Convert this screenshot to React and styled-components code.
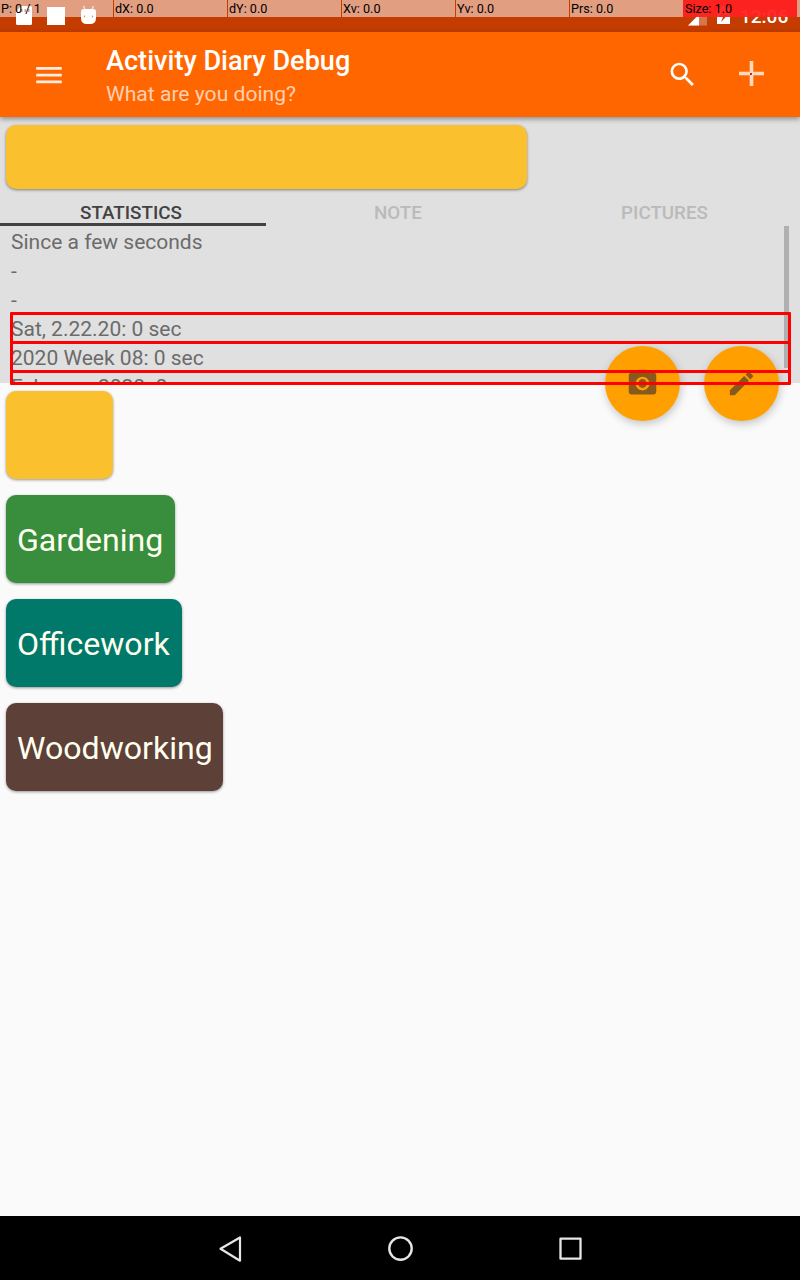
import React from "react";
import styled, { createGlobalStyle } from "styled-components";

const GlobalStyle = createGlobalStyle`
  * { box-sizing: border-box; }
  body { margin: 0; background: #fafafa; font-family: Roboto, "Liberation Sans", sans-serif; }
  svg { display: block; }
`;

const Screen = styled.div`
  position: relative;
  width: 800px;
  height: 1280px;
  overflow: hidden;
  display: flex;
  flex-direction: column;
  background: #fafafa;
`;

const StatusBar = styled.header`
  flex: none;
  height: 32px;
  padding: 0 11px 0 13px;
  display: flex;
  justify-content: space-between;
  align-items: center;
  background: #c43c00;
  color: #fff;
`;

const StatusGroup = styled.div`
  display: flex;
  align-items: center;
  gap: ${(p) => p.$gap}px;
`;

const Clock = styled.span`
  height: 32px;
  padding-top: 1px;
  font-size: 19px;
  font-weight: 500;
  line-height: 32px;
  width: 49px;
  white-space: nowrap;
`;

const PointerBar = styled.div`
  position: absolute;
  top: 0;
  left: 0;
  width: 800px;
  height: 17px;
  display: flex;
  gap: 1px;
`;

const PointerCell = styled.span`
  flex: ${(p) => (p.$last ? "1" : "none")};
  width: 113px;
  height: 17px;
  margin-left: ${(p) => (p.$hot ? -1 : 0)}px;
  padding-left: ${(p) => (p.$hot ? 2 : 1)}px;
  font-size: 12.6px;
  line-height: 17px;
  color: #000;
  white-space: pre;
  background: ${(p) => (p.$hot ? "linear-gradient(90deg, rgba(255,33,33,.94) 114px, rgba(255,255,255,.5) 114px)" : "rgba(255,255,255,.5)")};
`;

const AppBar = styled.div`
  flex: none;
  position: relative;
  z-index: 1;
  height: 85px;
  display: flex;
  align-items: center;
  padding: 0 33px 0 33px;
  background: #ff6600;
  box-shadow: 0 2px 5px rgba(0, 0, 0, 0.38);
`;

const Titles = styled.div`
  flex: 1;
  margin-left: 41px;
  padding-top: 6px;
`;

const Title = styled.h1`
  margin: 0;
  font-size: 27.1px;
  font-weight: 500;
  line-height: 32px;
  color: #fff;
`;

const Subtitle = styled.p`
  margin: 0;
  font-size: 21.1px;
  line-height: 33px;
  color: rgba(255, 255, 255, 0.7);
`;

const Actions = styled.div`
  display: flex;
  align-items: center;
  gap: 37px;
  padding-bottom: 2px;
`;

const Detail = styled.section`
  flex: none;
  height: 266px;
  overflow: hidden;
  background: #e0e0e0;
`;

const CurrentActivity = styled.div`
  width: 521px;
  height: 64px;
  margin: 8px 0 0 6px;
  border-radius: 10px;
  background: #fbc02d;
  box-shadow: 0 1px 3px rgba(0, 0, 0, 0.45);
`;

const Tabs = styled.div`
  display: grid;
  grid-template-columns: 266px 266px 268px;
  height: 37px;
`;

const Tab = styled.div`
  padding: 15px ${(p) => p.$shift}px 0 0;
  border-bottom: 3px solid ${(p) => (p.$active ? "#424242" : "transparent")};
  color: ${(p) => (p.$active ? "#424242" : "#bababa")};
  font-size: 18.8px;
  font-weight: 500;
  line-height: 19px;
  text-align: center;
`;

const StatsScroll = styled.div`
  display: flex;
  justify-content: space-between;
  height: 157px;
  padding: 0 11px;
  overflow: hidden;
`;

const StatList = styled.div`
  padding-top: 2px;
`;

const Stat = styled.div`
  height: 29px;
  font-size: 21px;
  line-height: 29px;
  color: #6b6b6b;
  white-space: nowrap;
`;

const ScrollThumb = styled.div`
  width: 5px;
  height: 142px;
  background: #b0b0b0;
`;

const Activities = styled.main`
  flex: 1;
  display: flex;
  flex-direction: column;
  align-items: flex-start;
  gap: 16px;
  padding: 8px 6px;
`;

const ActivityCard = styled.button`
  width: ${(p) => p.$width}px;
  height: 88px;
  padding: 1px 0 0 11px;
  border: 0;
  border-radius: 10px;
  background: ${(p) => p.$color};
  box-shadow: 0 1px 3px rgba(0, 0, 0, 0.4);
  color: #fffff0;
  font-family: inherit;
  font-size: 32.1px;
  text-align: left;
  white-space: nowrap;
`;

const Fabs = styled.div`
  position: absolute;
  left: 605px;
  top: 346px;
  display: flex;
  gap: 24px;
`;

const Fab = styled.div`
  width: 75px;
  height: 75px;
  padding-right: 1px;
  border-radius: 50%;
  display: flex;
  align-items: center;
  justify-content: center;
  background: #ffa000;
  box-shadow: 1px 3px 9px rgba(0, 0, 0, 0.22);
  color: #855a1c;
`;

const Outlines = styled.div`
  position: absolute;
  left: 10px;
  top: 312px;
  width: 781px;
  height: 73px;
  border: 3px solid #f00;
  border-radius: 1px;
  display: grid;
  grid-template-rows: 29px 29px 1fr;
`;

const OutlineRow = styled.div`
  border-bottom: ${(p) => (p.$last ? 0 : 3)}px solid #f00;
`;

const NavBar = styled.nav`
  flex: none;
  height: 64px;
  display: flex;
  justify-content: center;
  align-items: center;
  gap: 138px;
  background: #000;
`;

const pointerFields = ["P: 0 / 1", "dX: 0.0", "dY: 0.0", "Xv: 0.0", "Yv: 0.0", "Prs: 0.0", "Size: 1.0"];

const stats = ["Since a few seconds", "-", "-", "Sat, 2.22.20: 0 sec", "2020 Week 08: 0 sec", "February 2020: 0 sec"];

const activities = [
  { name: "", color: "#fbc02d", width: 107 },
  { name: "Gardening", color: "#388e3c", width: 169 },
  { name: "Officework", color: "#00796b", width: 176 },
  { name: "Woodworking", color: "#5d4037", width: 217 },
];

const SdCardIcon = () => (
  <svg width="22" height="32" viewBox="0 0 22 32" fill="#fff">
    <path fillRule="evenodd" d="M8 6h9.500q1.500 0 1.500 1.500v16q0 1.500-1.500 1.500h-13q-1.500 0-1.500-1.500v-12zM8 9v3h1.500v-3zm3.500 0v3h1.500v-3zm3.500 0v3h1.500v-3z" />
  </svg>
);

const SquareIcon = () => (
  <svg width="18" height="32" fill="#fff"><rect y="7" width="18" height="18" /></svg>
);

const DroidIcon = () => (
  <svg width="20" height="32" viewBox="-3.500 0 20 32">
    <path d="M3 6l2 4M13 6l-2 4" stroke="#fff" strokeWidth="1" />
    <path fillRule="evenodd" fill="#fff" d="M3 9h10q2.500 0 2.500 3v6q0 6-6 6h-3q-6 0-6-6v-6q0-3 2.500-3zm1 6.500a.8.8 0 1 0 .01 0zm8 0a.8.8 0 1 0 .01 0z" />
  </svg>
);

const SignalIcon = () => (
  <svg width="19" height="32">
    <path d="M0 25.500L19 6.500v19z" fill="#fff" fillOpacity=".3" />
    <path d="M0 25.500L11 14.500v11z" fill="#fff" />
  </svg>
);

const BatteryIcon = () => (
  <svg width="13" height="32">
    <path fillRule="evenodd" fill="#fff" d="M0 8h4V6h5v2h4v16H0zM8 10L2.500 17H6l-2 5 6.500-7H7z" />
  </svg>
);

const MenuIcon = () => (
  <svg width="32" height="32" stroke="#fff" strokeOpacity=".88" strokeWidth="2.700">
    <path d="M3.200 9.300h25.600M3.200 16.200h25.600M3.200 22.900h25.600" />
  </svg>
);

const SearchIcon = () => (
  <svg width="32" height="32" viewBox="-0.400 -0.500 24 24" fill="#fff">
    <path d="M15.500 14h-.79l-.28-.27A6.471 6.471 0 0 0 16 9.500 6.500 6.500 0 1 0 9.500 16c1.610 0 3.090-.59 4.230-1.570l.27.28v.79l5 4.990L20.490 19l-4.990-5zm-6 0C7.010 14 5 11.990 5 9.500S7.010 5 9.500 5 14 7.010 14 9.500 11.990 14 9.500 14z" />
  </svg>
);

const AddIcon = () => (
  <svg width="32" height="32">
    <path d="M16.500 3v25M4 15.500h25" stroke="#ffd9c0" strokeWidth="3.600" />
    <path d="M15 15h2v2h-2z" fill="#f01030" />
  </svg>
);

const CameraIcon = () => (
  <svg width="33" height="33" viewBox="0 0 24 24" fill="currentColor">
    <circle cx="12" cy="12" r="3.200" />
    <path d="M9 2L7.170 4H4c-1.100 0-2 .9-2 2v12c0 1.100.9 2 2 2h16c1.100 0 2-.9 2-2V6c0-1.100-.9-2-2-2h-3.170L15 2H9zm3 15c-2.760 0-5-2.240-5-5s2.240-5 5-5 5 2.240 5 5-2.240 5-5 5z" />
  </svg>
);

const EditIcon = () => (
  <svg width="31" height="31" viewBox="0 0 24 24" fill="currentColor">
    <path d="M3 17.250V21h3.750L17.810 9.940l-3.750-3.750L3 17.250zM20.710 7.040a.996.996 0 0 0 0-1.410l-2.340-2.340a.996.996 0 0 0-1.410 0l-1.830 1.830 3.750 3.750 1.830-1.830z" />
  </svg>
);

const BackIcon = () => (
  <svg width="32" height="32" fill="none" stroke="#e6e6e6" strokeWidth="2.200" strokeLinejoin="round">
    <path d="M26 5.500v23.200L6.500 16.800z" />
  </svg>
);

const HomeIcon = () => (
  <svg width="32" height="32" fill="none" stroke="#e6e6e6" strokeWidth="2.400">
    <circle cx="16.500" cy="16.600" r="11.200" />
  </svg>
);

const RecentsIcon = () => (
  <svg width="32" height="32" fill="none" stroke="#e6e6e6" strokeWidth="2.300" strokeLinejoin="round">
    <rect x="6.500" y="6.700" width="20" height="20" />
  </svg>
);

export default function App() {
  return (
    <>
      <GlobalStyle />
      <Screen>
        <StatusBar>
          <StatusGroup $gap={12}>
            <SdCardIcon />
            <SquareIcon />
            <DroidIcon />
          </StatusGroup>
          <StatusGroup $gap={10}>
            <SignalIcon />
            <BatteryIcon />
            <Clock>12:06</Clock>
          </StatusGroup>
        </StatusBar>
        <AppBar>
          <MenuIcon />
          <Titles>
            <Title>Activity Diary Debug</Title>
            <Subtitle>What are you doing?</Subtitle>
          </Titles>
          <Actions>
            <SearchIcon />
            <AddIcon />
          </Actions>
        </AppBar>
        <Detail>
          <CurrentActivity />
          <Tabs>
            <Tab $active $shift={4}>STATISTICS</Tab>
            <Tab $shift={2}>NOTE</Tab>
            <Tab $shift={3}>PICTURES</Tab>
          </Tabs>
          <StatsScroll>
            <StatList>
              {stats.map((text, i) => (
                <Stat key={i}>{text}</Stat>
              ))}
            </StatList>
            <ScrollThumb />
          </StatsScroll>
        </Detail>
        <Activities>
          {activities.map((a) => (
            <ActivityCard key={a.name} $color={a.color} $width={a.width}>{a.name}</ActivityCard>
          ))}
        </Activities>
        <NavBar>
          <BackIcon />
          <HomeIcon />
          <RecentsIcon />
        </NavBar>
        <Fabs>
          <Fab><CameraIcon /></Fab>
          <Fab><EditIcon /></Fab>
        </Fabs>
        <Outlines>
          <OutlineRow />
          <OutlineRow />
          <OutlineRow $last />
        </Outlines>
        <PointerBar>
          {pointerFields.map((text, i) => (
            <PointerCell key={text} $hot={i === 6} $last={i === 6}>{text}</PointerCell>
          ))}
        </PointerBar>
      </Screen>
    </>
  );
}
